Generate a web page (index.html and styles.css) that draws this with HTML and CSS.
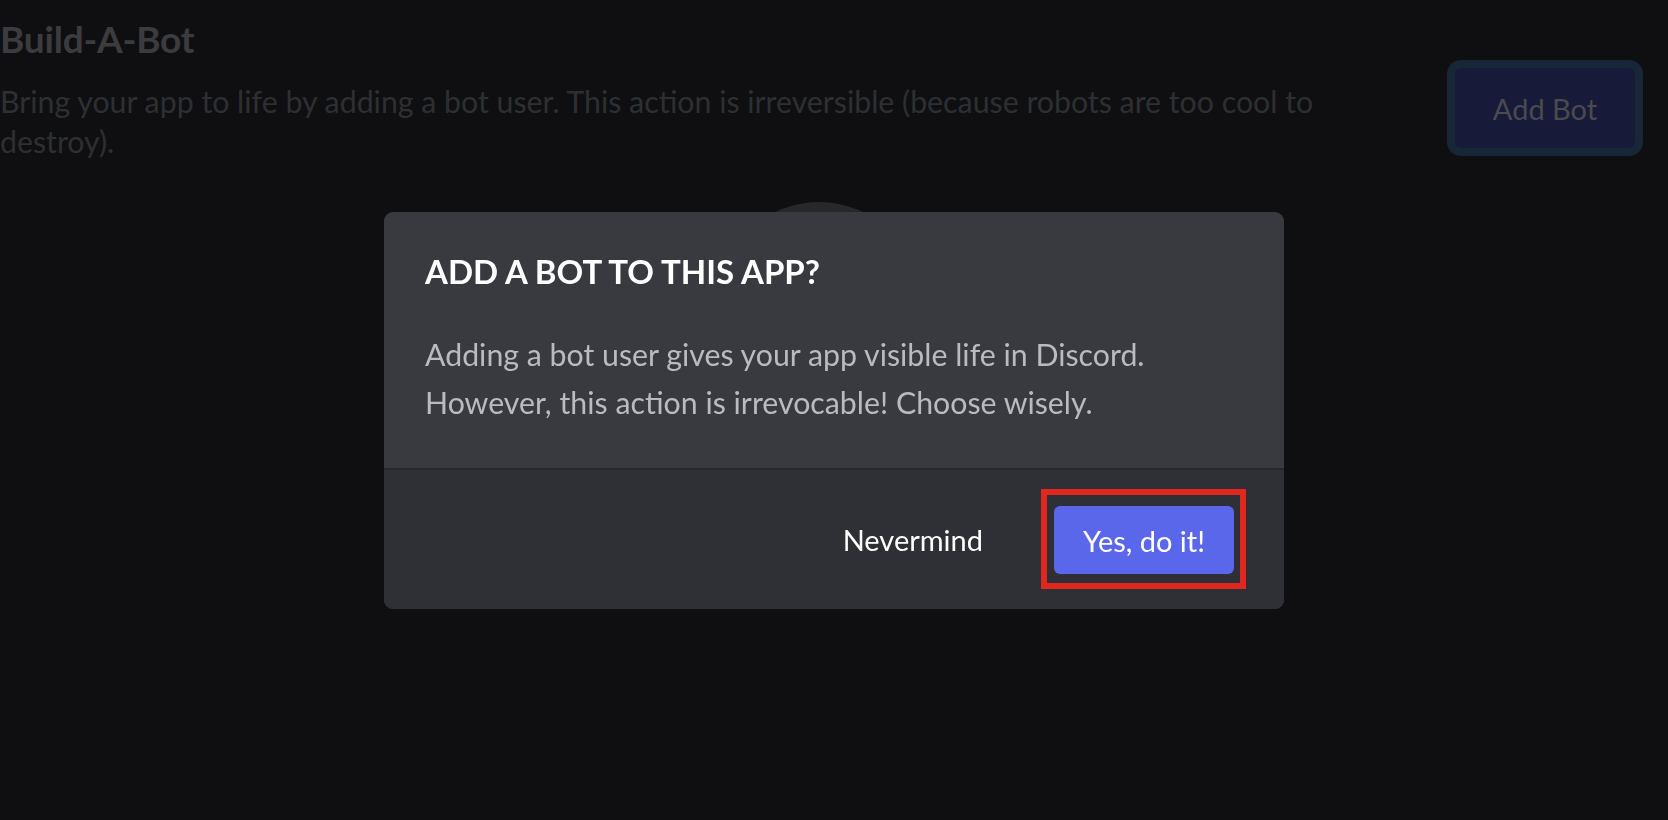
FILE: index.html
```html
<!DOCTYPE html>
<html lang="en">
<head>
<meta charset="utf-8">
<title>Build-A-Bot</title>
<link rel="stylesheet" href="styles.css">
</head>
<body>
<main class="page">
  <section class="bot-section">
    <div class="bot-text">
      <h1 class="bot-title">Build-A-Bot</h1>
      <p class="bot-desc">Bring your app to life by adding a bot user. This action is irreversible (because robots are too cool to destroy).</p>
    </div>
    <div class="bot-action">
      <button class="add-bot">Add Bot</button>
    </div>
  </section>
  <div class="avatar"></div>
</main>

<div class="overlay">
  <div class="modal" role="dialog">
    <div class="modal-body">
      <h2 class="modal-title">ADD A BOT TO THIS APP?</h2>
      <p class="modal-text">Adding a bot user gives your app visible life in Discord.<br>However, this action is irrevocable! Choose wisely.</p>
    </div>
    <div class="modal-footer">
      <button class="btn-link">Nevermind</button>
      <div class="highlight">
        <button class="btn-primary">Yes, do it!</button>
      </div>
    </div>
  </div>
</div>
</body>
</html>
```

FILE: styles.css
```css
* { box-sizing: border-box; }
html, body {
  margin: 0;
  padding: 0;
  width: 1668px;
  height: 820px;
  overflow: hidden;
  background: #0f0f11;
  font-family: Lato, "Open Sans", "Liberation Sans", sans-serif;
}
.page {
  padding: 0 25px 0 0;
}
.bot-section {
  display: flex;
  justify-content: space-between;
  align-items: flex-start;
  gap: 40px;
}
.bot-text {
  flex: 1;
  max-width: 1340px;
}
.bot-title {
  margin: 0;
  padding-top: 15px;
  font-size: 37px;
  line-height: 48px;
  font-weight: 700;
  color: #3c3c3f;
  letter-spacing: -0.2px;
}
.bot-desc {
  margin: 18px 0 0 0;
  font-size: 30.3px;
  line-height: 40px;
  color: #2e2f32;
}
.bot-action {
  padding-top: 60px;
}
.add-bot {
  display: block;
  width: 196px;
  height: 96px;
  border: 8px solid #172737;
  border-radius: 14px;
  background: #181a3a;
  color: #4a4a4f;
  font-family: inherit;
  font-size: 29px;
}
.avatar {
  width: 204px;
  height: 204px;
  margin: 41px 0 0 717px;
  border-radius: 50%;
  background: #28282a;
}
.overlay {
  position: fixed;
  inset: 0;
  display: flex;
  align-items: center;
  justify-content: center;
}
.modal {
  width: 900px;
  border-radius: 9px;
  overflow: hidden;
  background: #393a40;
}
.modal-body {
  padding: 39px 41px 0 41px;
  border-bottom: 2px solid #27282c;
}
.modal-title {
  margin: 0;
  font-size: 33px;
  line-height: 40px;
  font-weight: 700;
  color: #ffffff;
}
.modal-text {
  margin: 39px 0 0 0;
  padding-bottom: 42px;
  font-size: 30.3px;
  line-height: 48px;
  color: #b9bbbe;
}
.modal-footer {
  display: flex;
  justify-content: flex-end;
  align-items: center;
  gap: 58px;
  height: 139px;
  padding: 0 38px 0 41px;
  background: #2f3035;
}
.btn-link {
  background: none;
  border: 0;
  padding: 0;
  color: #ffffff;
  font-family: inherit;
  font-size: 29px;
}
.highlight {
  border: 6px solid #e2281e;
  padding: 11px 6px 9px 7px;
}
.btn-primary {
  display: block;
  width: 180px;
  height: 68px;
  border: 0;
  border-radius: 6px;
  background: #5a67ea;
  color: #ffffff;
  font-family: inherit;
  font-size: 29px;
}
```
